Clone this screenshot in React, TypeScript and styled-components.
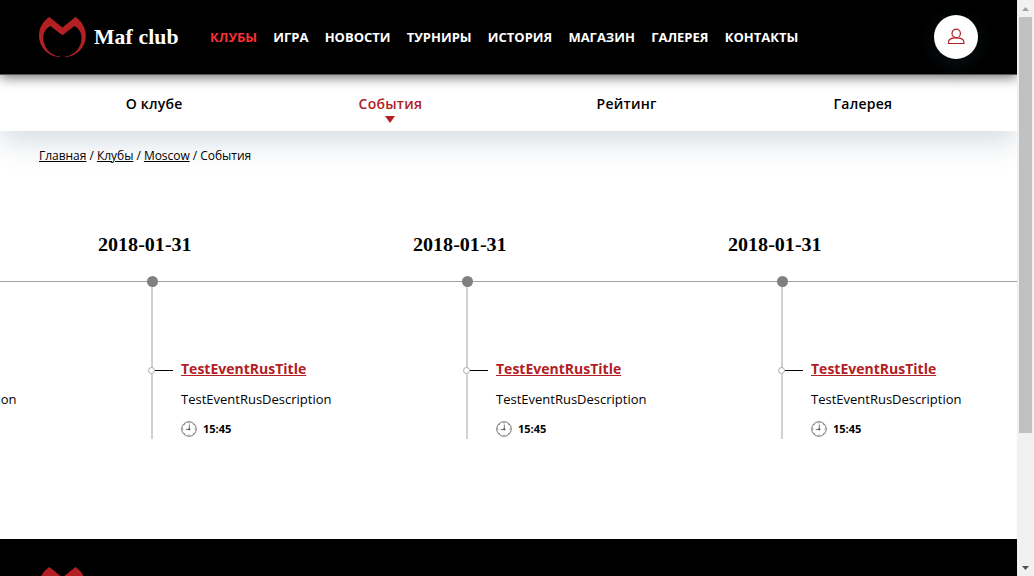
import React from 'react';
import styled, { createGlobalStyle } from 'styled-components';

const Global = createGlobalStyle`
  * { box-sizing: border-box; }
  html, body { margin: 0; height: 100%; overflow: hidden; }
  body { background: #fff; color: #000; font-family: "Open Sans", sans-serif; }
  a { color: inherit; }
`;

const Window = styled.div`
  display: flex;
  height: 576px;
  width: 1034px;
  overflow: hidden;
`;
const Page = styled.div`
  width: 1017px;
  height: 576px;
  display: flex;
  flex-direction: column;
  overflow: hidden;
`;
const Header = styled.header`
  position: relative;
  z-index: 3;
  flex: none;
  height: 75px;
  padding: 0 39px;
  display: flex;
  align-items: center;
  background: #000;
  border-bottom: 1px solid #555;
  box-shadow: 0 2px 12px rgba(0, 0, 0, 0.6);
`;
const Brand = styled.a`
  display: flex;
  align-items: center;
  width: 171px;
  color: #fff;
  text-decoration: none;
`;
const BrandName = styled.span`
  margin-left: 8px;
  font: 700 21px/28px "Liberation Serif", serif;
  letter-spacing: 0.1px;
  white-space: nowrap;
  transform: scaleX(1.035);
  transform-origin: left;
  padding-bottom: 1px;
`;
const MainNav = styled.nav`
  display: flex;
  gap: 16.2px;
`;
const NavLink = styled.a<{ $active?: boolean }>`
  font-size: 13px;
  line-height: 18px;
  font-weight: 700;
  text-decoration: none;
  white-space: nowrap;
  color: ${p => (p.$active ? '#f92f35' : '#fff')};
`;
const UserButton = styled.button`
  display: grid;
  place-items: center;
  width: 44px;
  height: 44px;
  margin-left: auto;
  padding: 0;
  border: 0;
  border-radius: 50%;
  background: #fff;
  box-shadow: 0 5px 20px rgba(56, 92, 117, 0.2);
`;
const SubNav = styled.nav`
  position: relative;
  z-index: 2;
  flex: none;
  height: 56px;
  padding: 0 36px;
  display: grid;
  grid-template-columns: repeat(4, 1fr);
  background: #fff;
  box-shadow: 0 10px 30px rgba(56, 92, 117, 0.22);
`;
const SubLink = styled.a<{ $active?: boolean }>`
  display: flex;
  flex-direction: column;
  align-items: center;
  padding-top: 19px;
  font-size: 14px;
  line-height: 20px;
  font-weight: 650;
  letter-spacing: 0.25px;
  color: ${p => (p.$active ? '#b22024' : '#000')};
`;
const Arrow = styled.span`
  margin-top: 2px;
  border: 5px solid transparent;
  border-top: 7px solid #b22024;
  border-bottom: 0;
`;
const Crumbs = styled.div`
  position: relative;
  z-index: 3;
  flex: none;
  height: 80px;
  padding: 16px 39px 0;
  font-size: 12px;
  line-height: 17px;
  letter-spacing: -0.03px;
`;
const Timeline = styled.main`
  flex: none;
  height: 328px;
  display: flex;
  padding-top: 20px;
  overflow: hidden;
`;
const Track = styled.div`
  display: flex;
  margin-left: -217px;
`;
const Day = styled.section`
  flex: none;
  width: 315px;
`;
const DateTitle = styled.h2`
  margin: 0;
  height: 50px;
  font: 700 18px/28px "Liberation Serif", serif;
  transform: scaleX(1.115);
  transform-origin: left;
`;
const Axis = styled.div`
  height: 1px;
  background: #a0a0a0;
`;
const Dot = styled.div`
  position: relative;
  z-index: 1;
  width: 11px;
  height: 11px;
  margin: -6px 0 -5px 49px;
  border-radius: 50%;
  background: #808080;
`;
const DayBody = styled.div`
  height: 157px;
  margin-left: 53px;
  border-left: 2px solid #d1d1d1;
  padding-top: 77px;
`;
const Event = styled.div`
  display: flex;
  align-items: flex-start;
`;
const Marker = styled.div`
  display: flex;
  align-items: center;
  width: 26px;
  margin: 8px 2px 0 -5px;
`;
const Ring = styled.span`
  width: 7px;
  height: 7px;
  border: 1px solid #aaa;
  border-radius: 50%;
  background: #fff;
`;
const Tick = styled.span`
  width: 18px;
  height: 1px;
  background: #000;
`;
const EventInfo = styled.div`
  display: flex;
  flex-direction: column;
  margin-left: 5px;
`;
const EventTitle = styled.a`
  font-size: 14px;
  line-height: 20px;
  font-weight: 700;
  color: #b22024;
  text-decoration: underline;
`;
const Description = styled.span`
  margin-top: 11px;
  font-size: 13px;
  line-height: 18px;
`;
const Time = styled.span`
  display: flex;
  align-items: center;
  gap: 6px;
  margin-top: 13px;
  font-size: 11px;
  line-height: 16px;
  font-weight: 700;
`;
const Footer = styled.footer`
  flex: none;
  height: 110px;
  padding: 28px 39px;
  background: #000;
`;
const ScrollBar = styled.div`
  width: 17px;
  height: 576px;
  display: flex;
  flex-direction: column;
  align-items: center;
  background: #f1f1f1;
`;
const ScrollEnd = styled.div`
  display: grid;
  place-items: center;
  width: 17px;
  height: 17px;
`;
const Thumb = styled.div`
  width: 13px;
  height: 416px;
  margin-bottom: auto;
  background: #c1c1c1;
`;
const Block = styled.svg`
  display: block;
  flex: none;
`;

const Logo = () => (
  <Block width="47" height="41" viewBox="0 0 47 41">
    <path
      fill="#b22024"
      d="M10.3 0 23.4 10.5 36.5 0C43 4.5 46.8 11 46.8 18.5 46.8 30.5 37.5 39.3 26 40.3V39.6C35.5 38.6 42.6 30.5 42.6 20.5 42.6 15.5 39.5 11.2 35.5 9L23.4 18.3 11.3 9C7.3 11.2 4.2 15.5 4.2 20.5 4.2 30.5 11.3 38.6 21 39.6V40.3C9.3 39.3 0 30.5 0 18.5 0 11 3.8 4.5 10.3 0Z"
    />
  </Block>
);
const UserIcon = () => (
  <Block width="18" height="18" viewBox="0 0 18 18" fill="none" stroke="#b22024" strokeWidth="1.2">
    <circle cx="9.2" cy="5.4" r="4.2" />
    <path d="M1.5 15.5V14C1.5 11.4 4.6 9.8 9.2 9.8 13.8 9.8 16.9 11.4 16.9 14V15.5Z" />
  </Block>
);
const ClockIcon = () => (
  <Block width="16" height="16" viewBox="0 0 16 16" fill="none" stroke="#555" strokeWidth=".8">
    <circle cx="8" cy="8" r="7.3" />
    <path d="M8.3 3.5V8.5H4.8" />
    <circle cx="8.3" cy="8.3" r=".8" fill="#555" />
    <path d="M8 1.2v1.1M8 13.6v1.1M1.2 8h1.1M13.6 8h1.1M3.2 3.2l.7.7M12 12l.7.7M3.2 12.8l.7-.7M12 4l.7-.7" />
  </Block>
);

const menu = ['КЛУБЫ', 'ИГРА', 'НОВОСТИ', 'ТУРНИРЫ', 'ИСТОРИЯ', 'МАГАЗИН', 'ГАЛЕРЕЯ', 'КОНТАКТЫ'];
const sections = ['О клубе', 'События', 'Рейтинг', 'Галерея'];
const days = [1, 2, 3, 4].map(id => ({
  id,
  date: '2018-01-31',
  title: 'TestEventRusTitle',
  text: 'TestEventRusDescription',
  time: '15:45',
}));

export default function App() {
  return (
    <Window>
      <Global />
      <Page>
        <Header>
          <Brand>
            <Logo />
            <BrandName>Maf club</BrandName>
          </Brand>
          <MainNav>
            {menu.map((m, i) => <NavLink key={m} $active={i === 0}>{m}</NavLink>)}
          </MainNav>
          <UserButton><UserIcon /></UserButton>
        </Header>
        <SubNav>
          {sections.map((s, i) => (
            <SubLink key={s} $active={i === 1}>{s}{i === 1 && <Arrow />}</SubLink>
          ))}
        </SubNav>
        <Crumbs>
          <a href="#">Главная</a> / <a href="#">Клубы</a> / <a href="#">Moscow</a> / События
        </Crumbs>
        <Timeline>
          <Track>
            {days.map(d => (
              <Day key={d.id}>
                <DateTitle>{d.date}</DateTitle>
                <Axis />
                <Dot />
                <DayBody>
                  <Event>
                    <Marker><Ring /><Tick /></Marker>
                    <EventInfo>
                      <EventTitle>{d.title}</EventTitle>
                      <Description>{d.text}</Description>
                      <Time><ClockIcon />{d.time}</Time>
                    </EventInfo>
                  </Event>
                </DayBody>
              </Day>
            ))}
          </Track>
        </Timeline>
        <Footer><Logo /></Footer>
      </Page>
      <ScrollBar>
        <ScrollEnd><svg width="7" height="4"><path d="M0 4 3.5 0 7 4Z" fill="#a3a3a3" /></svg></ScrollEnd>
        <Thumb />
        <ScrollEnd><svg width="7" height="4"><path d="M0 0H7L3.5 4Z" fill="#505050" /></svg></ScrollEnd>
      </ScrollBar>
    </Window>
  );
}
